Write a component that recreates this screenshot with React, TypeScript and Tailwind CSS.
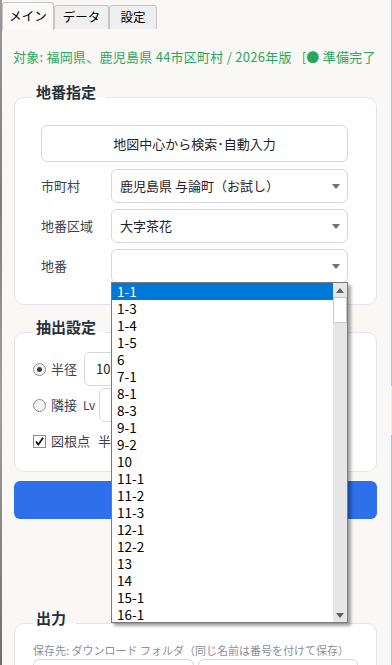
import React from "react";

const items = ["1-1","1-3","1-4","1-5","6","7-1","8-1","8-3","9-1","9-2","10","11-1","11-2","11-3","12-1","12-2","13","14","15-1","16-1"];

const FONT = { fontFamily: '"Noto Sans CJK JP", "Noto Sans", sans-serif' };

function Caret() {
  return (
    <svg width="8" height="5" viewBox="0 0 8 5" className="shrink-0">
      <path d="M0 0h8L4 5z" fill="#6b6e73" />
    </svg>
  );
}

function Heading({ children }: { children: React.ReactNode }) {
  return (
    <div className="relative z-10 ml-[19px] -mb-[5px] w-fit pl-[3px] pr-[10px] text-[15px] font-bold leading-[20px] text-[#28303c] bg-[linear-gradient(to_bottom,#f9f8f7_75%,#ffffff_75%)]">
      {children}
    </div>
  );
}

function SelectRow({ label, value }: { label: string; value: string }) {
  return (
    <div className="flex items-center">
      <div className="w-[70px] text-[13px] text-[#3b4250]">{label}</div>
      <div className="flex h-[34px] w-[237px] items-center justify-between rounded-[6px] border border-[#d4d7dd] bg-white pl-[8px] pr-[7px] text-[13px] text-[#1f2328]">
        <span>{value}</span>
        <Caret />
      </div>
    </div>
  );
}

export default function App() {
  return (
    <div className="flex h-[665px] w-[392px] overflow-hidden bg-[#f9f8f7]" style={FONT}>
      <div className="w-[2px] shrink-0 bg-[linear-gradient(to_bottom,#9a9a9a,#7d7d7d_30%,#a0a0a0_60%,#6f6f6f)]" />
      <div className="relative w-[389px] shrink-0">
        {/* tabs */}
        <div className="flex h-[30px] items-end">
          <div className="flex h-[28px] w-[52px] items-center justify-center rounded-t-[3px] border-l border-r border-t border-[#c6c6c6] bg-[#fbfaf9] text-[12.5px] text-black">
            メイン
          </div>
          <div className="mb-[1px] flex h-[24px] w-[55px] items-center justify-center rounded-t-[3px] border-l border-r border-t border-[#c6c6c6] bg-[#efefef] text-[12.5px] text-black">
            データ
          </div>
          <div className="mb-[1px] flex h-[24px] w-[48px] items-center justify-center rounded-t-[3px] border-l border-r border-t border-[#c6c6c6] bg-[#efefef] text-[12.5px] text-black">
            設定
          </div>
        </div>

        {/* status */}
        <div className="mt-[18px] pl-[11px] text-[13px] leading-[18px] tracking-[0.25px] text-[#2aa65a] whitespace-nowrap">
          対象: 福岡県、鹿児島県 44市区町村 / 2026年版<span className="ml-[10px]">[● 準備完了</span>
        </div>

        {/* 地番指定 */}
        <div className="ml-[12px] mt-[16px] w-[363px]">
          <Heading>地番指定</Heading>
          <div className="rounded-[10px] border border-[#e3e5e9] bg-white pb-[21px] pl-[26px] pr-[28px] pt-[27px]">
            <div className="flex h-[37px] items-center justify-center rounded-[6px] border border-[#d4d7dd] bg-white text-[13px] text-[#1f2328]">
              地図中心から検索･自動入力
            </div>
            <div className="mt-[7px] flex flex-col gap-[6px]">
              <SelectRow label="市町村" value="鹿児島県 与論町（お試し）" />
              <SelectRow label="地番区域" value="大字茶花" />
              <SelectRow label="地番" value="" />
            </div>
          </div>
        </div>

        {/* 抽出設定 */}
        <div className="ml-[12px] mt-[12px] w-[363px]">
          <Heading>抽出設定</Heading>
          <div className="rounded-[10px] border border-[#e3e5e9] bg-white pb-[20px] pl-[18px] pr-[28px] pt-[19px] text-[13px] text-[#3b4250]">
            <div className="flex h-[34px] items-center">
              <span className="flex h-[13px] w-[13px] items-center justify-center rounded-full border border-[#8c8c8c] bg-[#f4f4f4]">
                <span className="h-[5px] w-[5px] rounded-full bg-[#3a3a3a]" />
              </span>
              <span className="ml-[5px]">半径</span>
              <div className="ml-[7px] flex h-[34px] w-[90px] items-center rounded-[6px] border border-[#d4d7dd] bg-white pl-[11px] text-[#1f2328]">
                10
              </div>
            </div>
            <div className="mt-[2px] flex h-[34px] items-center">
              <span className="h-[13px] w-[13px] rounded-full border border-[#8c8c8c] bg-[#f4f4f4]" />
              <span className="ml-[5px]">隣接</span>
              <span className="ml-[6px] text-[12px]">Lv</span>
              <div className="ml-[4px] h-[34px] w-[90px] rounded-[6px] border border-[#d4d7dd] bg-white" />
            </div>
            <div className="mt-[9px] flex h-[20px] items-center">
              <span className="flex h-[13px] w-[13px] items-center justify-center border border-[#8c8c8c] bg-white">
                <svg width="11" height="11" viewBox="0 0 11 11">
                  <path d="M2 5.5 L4.3 8.5 L9.2 1.8" fill="none" stroke="#111" strokeWidth="1.8" />
                </svg>
              </span>
              <span className="ml-[5px]">図根点</span>
              <span className="ml-[8px]">半</span>
            </div>
          </div>
        </div>

        {/* 実行ボタン */}
        <div className="ml-[12px] mt-[9px] h-[38px] w-[363px] rounded-[6px] bg-[#2f6fe9]" />

        {/* 出力 */}
        <div className="ml-[12px] mt-[89px] w-[363px]">
          <Heading>出力</Heading>
          <div className="rounded-[10px] border border-[#e3e5e9] bg-white pb-[20px] pl-[18px] pr-[18px] pt-[18px]">
            <div className="text-[11px] leading-[16px] text-[#8a8f98]">
              保存先: ダウンロード フォルダ（同じ名前は番号を付けて保存）
            </div>
            <div className="mt-[1px] flex gap-[4px]">
              <div className="h-[34px] w-[161px] rounded-[6px] border border-[#d4d7dd] bg-white" />
              <div className="h-[34px] w-[161px] rounded-[6px] border border-[#d4d7dd] bg-white" />
            </div>
          </div>
        </div>

        {/* dropdown listbox */}
        <div className="absolute left-[109px] top-[282px] flex h-[341px] w-[237px] border border-[#7a7a7a] bg-white shadow-[3px_3px_3px_rgba(0,0,0,0.35)]">
          <div className="flex-1">
            {items.map((it, i) => (
              <div
                key={it}
                className={
                  i === 0
                    ? "h-[17px] bg-[#0078d7] pl-[5px] text-[13.5px] leading-[17px] text-white"
                    : "h-[17px] pl-[5px] text-[13.5px] leading-[17px] text-black"
                }
              >
                {it}
              </div>
            ))}
          </div>
          <div className="flex w-[14px] flex-col bg-[#e6e6e6]">
            <div className="flex h-[14px] items-center justify-center">
              <svg width="8" height="5" viewBox="0 0 8 5">
                <path d="M0 5h8L4 0z" fill="#606060" />
              </svg>
            </div>
            <div className="h-[26px] border border-[#c8c8c8] bg-white" />
            <div className="flex-1" />
            <div className="flex h-[14px] items-center justify-center">
              <svg width="8" height="5" viewBox="0 0 8 5">
                <path d="M0 0h8L4 5z" fill="#606060" />
              </svg>
            </div>
          </div>
        </div>
      </div>
      <div className="flex w-[1px] shrink-0 flex-col">
        <div className="h-[386px] bg-[#a9c3ef]" />
        <div className="h-[49px] bg-[#ececec]" />
        <div className="flex-1 bg-[#a9c3ef]" />
      </div>
    </div>
  );
}
